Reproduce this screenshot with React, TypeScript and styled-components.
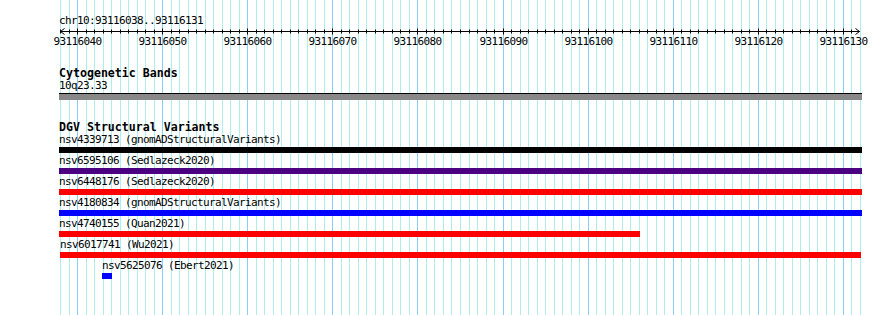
import React from 'react';
import styled, { createGlobalStyle } from 'styled-components';

const START = 93116038;
const END = 93116131;
const X0 = 60;
const SPAN = 800;
const PAGE_W = 890;
const PAGE_H = 315;

const bpX = (bp: number) => X0 + Math.round(((bp - START) * SPAN) / (END - START + 1));

const GlobalStyle = createGlobalStyle`
  html, body {
    margin: 0;
    padding: 0;
    background: #ffffff;
  }
`;

const Page = styled.div`
  position: relative;
  width: ${PAGE_W}px;
  height: ${PAGE_H}px;
  overflow: hidden;
  background: #ffffff;
  color: #000000;
  font-family: 'DejaVu Sans Mono', 'Liberation Mono', monospace;
  font-size: 11px;
  letter-spacing: -0.62px;
`;

const GridLayer = styled.svg`
  position: absolute;
  top: 0;
  left: 0;
  z-index: 0;
`;

const Content = styled.div`
  position: relative;
  z-index: 1;
  display: flex;
  flex-direction: column;
`;

const LocationLabel = styled.div`
  margin: 15px 0 0 59px;
  height: 12px;
  line-height: 12px;
  white-space: nowrap;
`;

const RulerSvg = styled.svg`
  display: block;
`;

const TrackSection = styled.section<{ $top: number }>`
  display: flex;
  flex-direction: column;
  margin-top: ${(p) => p.$top}px;
`;

const TrackTitle = styled.div`
  padding-left: 59px;
  height: 13px;
  line-height: 13px;
  font-size: 11.6px;
  font-weight: bold;
  letter-spacing: 0;
  white-space: nowrap;
`;

const FeatureLabel = styled.div<{ $left: number }>`
  padding-left: ${(p) => p.$left}px;
  height: 11px;
  line-height: 11px;
  white-space: nowrap;
`;

const Band = styled.div`
  box-sizing: border-box;
  margin: 2px 0 0 59px;
  width: 803px;
  height: 7px;
  background: #888888;
  border-top: 1px solid #000000;
`;

const FeatureRow = styled.div`
  display: flex;
  flex-direction: column;
  margin-bottom: 2px;
`;

const FeatureBar = styled.div<{ $left: number; $width: number; $color: string }>`
  margin: 2px 0 0 ${(p) => p.$left}px;
  width: ${(p) => p.$width}px;
  height: 6px;
  background: ${(p) => p.$color};
`;

type Feature = { name: string; left: number; right: number; color: string };

const features: Feature[] = [
  { name: 'nsv4339713 (gnomADStructuralVariants)', left: 59, right: 862, color: '#000000' },
  { name: 'nsv6595106 (Sedlazeck2020)', left: 59, right: 862, color: '#4b0082' },
  { name: 'nsv6448176 (Sedlazeck2020)', left: 59, right: 862, color: '#ff0000' },
  { name: 'nsv4180834 (gnomADStructuralVariants)', left: 59, right: 862, color: '#0000ff' },
  { name: 'nsv4740155 (Quan2021)', left: 59, right: 640, color: '#ff0000' },
  { name: 'nsv6017741 (Wu2021)', left: 60, right: 861, color: '#ff0000' },
  { name: 'nsv5625076 (Ebert2021)', left: 102, right: 112, color: '#0000ff' },
];

const gridBases = Array.from({ length: END - START + 2 }, (_, i) => START + i);

const Grid = () => (
  <GridLayer width={PAGE_W} height={PAGE_H}>
    {gridBases.map((bp) => {
      const x = bpX(bp) + 0.5;
      return (
        <line
          key={bp}
          x1={x}
          x2={x}
          y1={0}
          y2={PAGE_H}
          stroke={bp % 10 === 0 ? '#87cefa' : '#afeeee'}
          strokeWidth={1}
        />
      );
    })}
  </GridLayer>
);

const Ruler = () => {
  const y = 4.5;
  const left = X0;
  const right = X0 + SPAN;
  return (
    <RulerSvg width={PAGE_W} height={20}>
      <line x1={left} x2={right} y1={y} y2={y} stroke="#000" />
      <path d={`M${left + 4.5} ${y - 3} L${left + 0.5} ${y} L${left + 4.5} ${y + 3}`} stroke="#000" fill="none" />
      <path d={`M${right - 4.5} ${y - 3} L${right - 0.5} ${y} L${right - 4.5} ${y + 3}`} stroke="#000" fill="none" />
      {gridBases.slice(0, -1).map((bp) => {
        const x = bpX(bp) + 0.5;
        const major = bp % 10 === 0;
        return (
          <line key={bp} x1={x} x2={x} y1={y - (major ? 3 : 2)} y2={y + (major ? 3 : 2)} stroke="#000" />
        );
      })}
      {gridBases
        .filter((bp) => bp % 10 === 0 && bp <= END)
        .map((bp) => (
          <text
            key={bp}
            x={bpX(bp) + 0.5}
            y={17.5}
            textAnchor="middle"
            fontFamily="'DejaVu Sans Mono', monospace"
            fontSize={11}
            letterSpacing={-0.62}
            fill="#000"
          >
            {bp}
          </text>
        ))}
    </RulerSvg>
  );
};

export default function App() {
  return (
    <Page>
      <GlobalStyle />
      <Grid />
      <Content>
        <LocationLabel>chr10:93116038..93116131</LocationLabel>
        <Ruler />

        <TrackSection $top={20}>
          <TrackTitle>Cytogenetic Bands</TrackTitle>
          <FeatureLabel $left={59}>10q23.33</FeatureLabel>
          <Band />
        </TrackSection>

        <TrackSection $top={21}>
          <TrackTitle>DGV Structural Variants</TrackTitle>
          {features.map((f) => (
            <FeatureRow key={f.name}>
              <FeatureLabel $left={f.left}>{f.name}</FeatureLabel>
              <FeatureBar $left={f.left} $width={f.right - f.left} $color={f.color} />
            </FeatureRow>
          ))}
        </TrackSection>
      </Content>
    </Page>
  );
}
